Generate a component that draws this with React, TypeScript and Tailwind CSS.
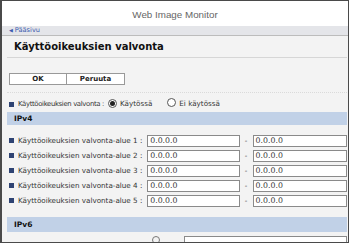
const rows = [1, 2, 3, 4, 5];

function Bullet() {
  return <span className="inline-block h-[5px] w-[5px] shrink-0 bg-[#2e4373]" />;
}

function Radio({ checked }: { checked?: boolean }) {
  return (
    <span className="inline-flex h-[9px] w-[9px] shrink-0 items-center justify-center rounded-full border border-[#555] bg-white">
      {checked && <span className="h-[5px] w-[5px] rounded-full bg-[#222]" />}
    </span>
  );
}

function IpInput() {
  return (
    <div className="flex h-[12px] items-center border border-[#8a8a8a] bg-white pl-[2px] text-[7.8px] leading-none text-[#333]">
      0.0.0.0
    </div>
  );
}

export default function App() {
  return (
    <div
      className="h-[244px] w-[350px] overflow-hidden bg-white"
      style={{ fontFamily: '"DejaVu Sans", Verdana, sans-serif' }}
    >
      <div className="flex h-[243px] w-[349px] flex-col overflow-hidden border-b border-l-2 border-r border-t border-[#4a4a4a]">
        <div
          className="flex h-[25px] shrink-0 items-center justify-center pt-[3px] text-[9.8px] text-[#666]"
          style={{ fontFamily: '"Liberation Sans", Arial, sans-serif' }}
        >
          Web Image Monitor
        </div>
        <div className="flex h-[10px] shrink-0 items-center border-b border-[#bcbcbc] bg-[#e4e5e9] pl-[7px] text-[6.6px] leading-none text-[#3c5cb0]">
          <span className="mr-[2px] text-[5px]">◀</span>Pääsivu
        </div>
        <div className="flex flex-1 flex-col bg-[#f3f3f3] pl-[5px] pr-[1px] text-[#333]">
          <div className="flex h-[22px] shrink-0 items-center border-b border-[#d6d6d6] pl-[7px] text-[10px] font-bold text-[#111]">
            Käyttöoikeuksien valvonta
          </div>
          <div className="flex h-[35px] shrink-0 items-center border-b border-dotted border-[#dadada] pl-[2px] pt-[8px]">
            <div className="flex h-[12px] w-[58px] items-center justify-center border border-[#999] bg-white text-[7px] font-bold text-[#222]">
              OK
            </div>
            <div className="flex h-[12px] w-[58px] items-center justify-center border border-l-0 border-[#999] bg-white text-[7px] font-bold text-[#222]">
              Peruuta
            </div>
          </div>
          <div className="flex h-[19px] shrink-0 items-center pl-[2px] pt-[3px] text-[6.9px] whitespace-nowrap">
            <Bullet />
            <span className="ml-[4px] tracking-[-0.35px]">Käyttöoikeuksien valvonta :</span>
            <span className="ml-[4px]">
              <Radio checked />
            </span>
            <span className="ml-[3px] text-[7.2px]">Käytössä</span>
            <span className="ml-[15px]">
              <Radio />
            </span>
            <span className="ml-[3px] text-[7.2px]">Ei käytössä</span>
          </div>
          <div className="flex h-[13px] shrink-0 items-center bg-[#c1d1e7] pl-[7px] text-[7.5px] font-bold text-[#111]">
            IPv4
          </div>
          <div className="flex flex-col gap-[3px] pt-[10px]">
            {rows.map((n) => (
              <div key={n} className="flex h-[12px] items-center">
                <div className="flex w-[141px] items-center gap-[4px] pl-[2px] text-[7.2px] whitespace-nowrap">
                  <Bullet />
                  <span>Käyttöoikeuksien valvonta-alue {n} :</span>
                </div>
                <div className="w-[93px]">
                  <IpInput />
                </div>
                <span className="w-[13px] text-center text-[7px]">-</span>
                <div className="w-[95px]">
                  <IpInput />
                </div>
              </div>
            ))}
          </div>
          <div className="mt-[10px] flex h-[15px] shrink-0 items-center bg-[#c1d1e7] pl-[7px] text-[7.5px] font-bold text-[#111]">
            IPv6
          </div>
          <div className="flex h-[12px] items-end pt-[4px]">
            <div className="ml-[145px] h-[8px] w-[8px] rounded-full border border-[#777]" />
            <div className="ml-[24px] h-[8px] flex-1 border border-[#8a8a8a] bg-white" />
          </div>
        </div>
      </div>
    </div>
  );
}
